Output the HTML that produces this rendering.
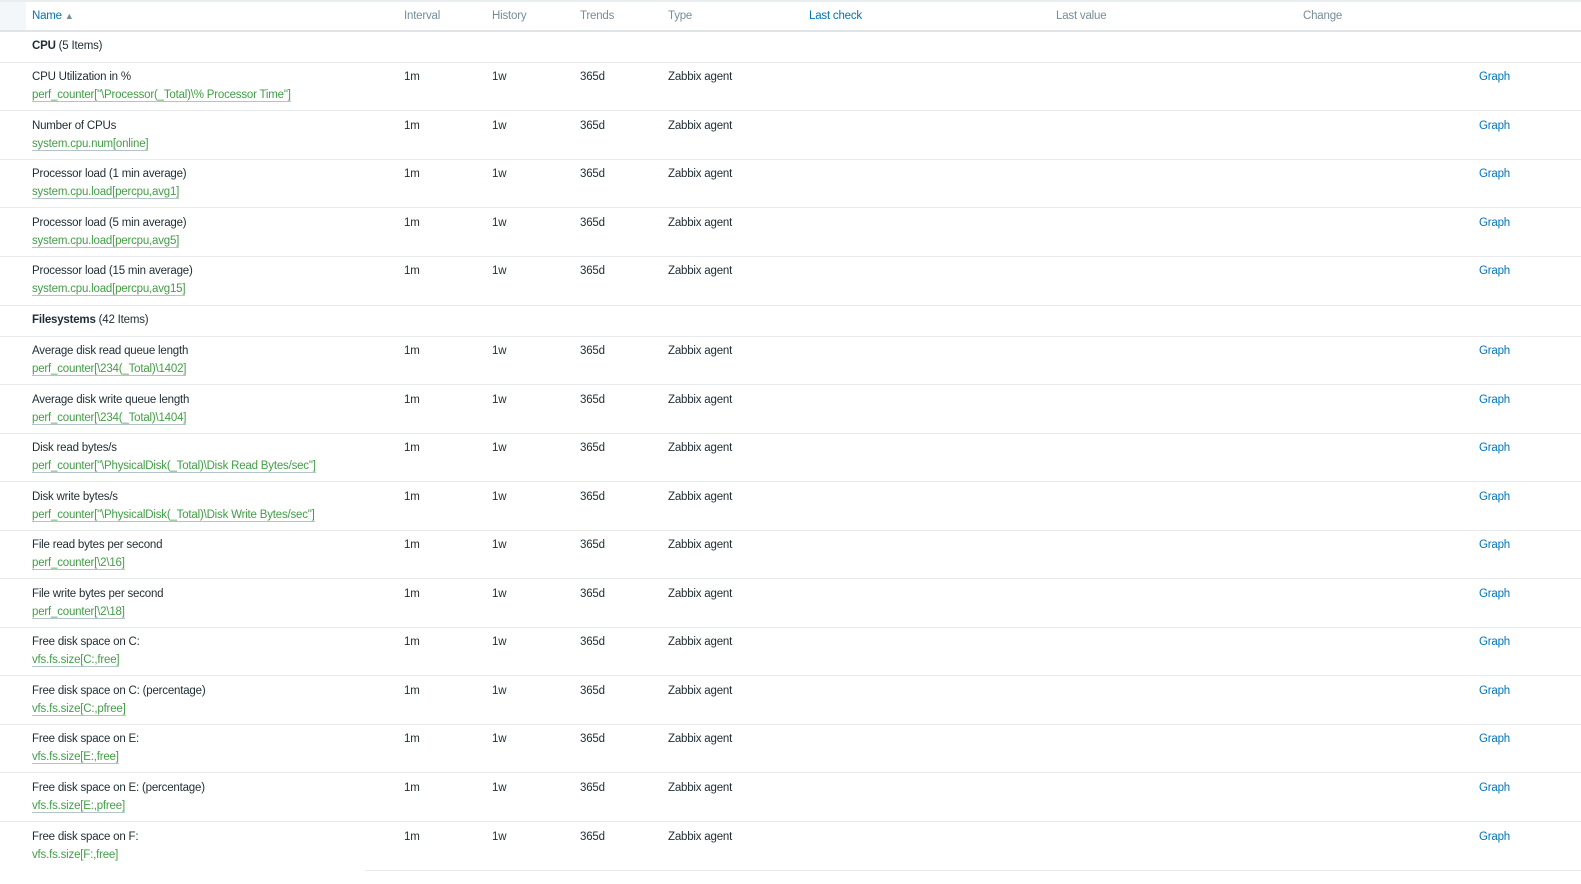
<!DOCTYPE html>
<html><head><meta charset="utf-8"><style>
html,body{margin:0;padding:0;background:#fff;width:1581px;height:884px;overflow:hidden;font-family:"Liberation Sans",sans-serif;font-size:11.5px;color:#1f2c33;letter-spacing:-0.2px}
.a{position:absolute;white-space:nowrap;line-height:14px}
.line{position:absolute;left:0;width:1581px;height:1px;background:#e8ebed}
.h{color:#768d99}
.b{color:#0275b8}
.k{color:#429e47;border-bottom:1px solid #b5c2c9;line-height:13px}
.g{color:#0275b8}
</style></head><body>
<div class="line" style="top:0;height:2px;background:#ebeef0"></div>
<div style="position:absolute;left:0;top:2px;width:26px;height:28px;background:#f4f7fa"></div>
<div class="line" style="top:30px;height:2px;background:#dfe4e7"></div>
<div class="a b" style="left:32px;top:9px">Name <span style="font-size:9px;color:#768d99">▲</span></div>
<div class="a h" style="left:404px;top:9px">Interval</div>
<div class="a h" style="left:492px;top:9px">History</div>
<div class="a h" style="left:580px;top:9px">Trends</div>
<div class="a h" style="left:668px;top:9px">Type</div>
<div class="a b" style="left:809px;top:9px">Last check</div>
<div class="a h" style="left:1056px;top:9px">Last value</div>
<div class="a h" style="left:1303px;top:9px">Change</div>
<div id="rows"></div>
<div class="a" style="left:32px;top:39px"><b>CPU</b> (5 Items)</div>
<div class="line" style="top:62px"></div>
<div class="a" style="left:32px;top:313px"><b>Filesystems</b> (42 Items)</div>
<div class="line" style="top:305px"></div>
<div class="line" style="top:336px"></div>
<div class="line" style="top:870px;left:365px;width:1216px"></div>

<div style="position:absolute;left:0;top:62px;width:1581px">
<div class="a" style="left:32px;top:8px">CPU Utilization in %</div><div class="a" style="left:32px;top:26px"><span class="k">perf_counter["\Processor(_Total)\% Processor Time"]</span></div>
<div class="a" style="left:404px;top:8px">1m</div><div class="a" style="left:492px;top:8px">1w</div><div class="a" style="left:580px;top:8px">365d</div><div class="a" style="left:668px;top:8px">Zabbix agent</div><div class="a g" style="left:1479px;top:8px">Graph</div>
<div class="line" style="top:48px"></div></div>

<div style="position:absolute;left:0;top:110.5px;width:1581px">
<div class="a" style="left:32px;top:8px">Number of CPUs</div><div class="a" style="left:32px;top:26px"><span class="k">system.cpu.num[online]</span></div>
<div class="a" style="left:404px;top:8px">1m</div><div class="a" style="left:492px;top:8px">1w</div><div class="a" style="left:580px;top:8px">365d</div><div class="a" style="left:668px;top:8px">Zabbix agent</div><div class="a g" style="left:1479px;top:8px">Graph</div>
<div class="line" style="top:48px"></div></div>

<div style="position:absolute;left:0;top:159px;width:1581px">
<div class="a" style="left:32px;top:8px">Processor load (1 min average)</div><div class="a" style="left:32px;top:26px"><span class="k">system.cpu.load[percpu,avg1]</span></div>
<div class="a" style="left:404px;top:8px">1m</div><div class="a" style="left:492px;top:8px">1w</div><div class="a" style="left:580px;top:8px">365d</div><div class="a" style="left:668px;top:8px">Zabbix agent</div><div class="a g" style="left:1479px;top:8px">Graph</div>
<div class="line" style="top:48px"></div></div>

<div style="position:absolute;left:0;top:207.5px;width:1581px">
<div class="a" style="left:32px;top:8px">Processor load (5 min average)</div><div class="a" style="left:32px;top:26px"><span class="k">system.cpu.load[percpu,avg5]</span></div>
<div class="a" style="left:404px;top:8px">1m</div><div class="a" style="left:492px;top:8px">1w</div><div class="a" style="left:580px;top:8px">365d</div><div class="a" style="left:668px;top:8px">Zabbix agent</div><div class="a g" style="left:1479px;top:8px">Graph</div>
<div class="line" style="top:48px"></div></div>

<div style="position:absolute;left:0;top:256px;width:1581px">
<div class="a" style="left:32px;top:8px">Processor load (15 min average)</div><div class="a" style="left:32px;top:26px"><span class="k">system.cpu.load[percpu,avg15]</span></div>
<div class="a" style="left:404px;top:8px">1m</div><div class="a" style="left:492px;top:8px">1w</div><div class="a" style="left:580px;top:8px">365d</div><div class="a" style="left:668px;top:8px">Zabbix agent</div><div class="a g" style="left:1479px;top:8px">Graph</div>
</div>

<div style="position:absolute;left:0;top:336px;width:1581px">
<div class="a" style="left:32px;top:8px">Average disk read queue length</div><div class="a" style="left:32px;top:26px"><span class="k">perf_counter[\234(_Total)\1402]</span></div>
<div class="a" style="left:404px;top:8px">1m</div><div class="a" style="left:492px;top:8px">1w</div><div class="a" style="left:580px;top:8px">365d</div><div class="a" style="left:668px;top:8px">Zabbix agent</div><div class="a g" style="left:1479px;top:8px">Graph</div>
<div class="line" style="top:48px"></div></div>

<div style="position:absolute;left:0;top:384.5px;width:1581px">
<div class="a" style="left:32px;top:8px">Average disk write queue length</div><div class="a" style="left:32px;top:26px"><span class="k">perf_counter[\234(_Total)\1404]</span></div>
<div class="a" style="left:404px;top:8px">1m</div><div class="a" style="left:492px;top:8px">1w</div><div class="a" style="left:580px;top:8px">365d</div><div class="a" style="left:668px;top:8px">Zabbix agent</div><div class="a g" style="left:1479px;top:8px">Graph</div>
<div class="line" style="top:48px"></div></div>

<div style="position:absolute;left:0;top:433px;width:1581px">
<div class="a" style="left:32px;top:8px">Disk read bytes/s</div><div class="a" style="left:32px;top:26px"><span class="k">perf_counter["\PhysicalDisk(_Total)\Disk Read Bytes/sec"]</span></div>
<div class="a" style="left:404px;top:8px">1m</div><div class="a" style="left:492px;top:8px">1w</div><div class="a" style="left:580px;top:8px">365d</div><div class="a" style="left:668px;top:8px">Zabbix agent</div><div class="a g" style="left:1479px;top:8px">Graph</div>
<div class="line" style="top:48px"></div></div>

<div style="position:absolute;left:0;top:481.5px;width:1581px">
<div class="a" style="left:32px;top:8px">Disk write bytes/s</div><div class="a" style="left:32px;top:26px"><span class="k">perf_counter["\PhysicalDisk(_Total)\Disk Write Bytes/sec"]</span></div>
<div class="a" style="left:404px;top:8px">1m</div><div class="a" style="left:492px;top:8px">1w</div><div class="a" style="left:580px;top:8px">365d</div><div class="a" style="left:668px;top:8px">Zabbix agent</div><div class="a g" style="left:1479px;top:8px">Graph</div>
<div class="line" style="top:48px"></div></div>

<div style="position:absolute;left:0;top:530px;width:1581px">
<div class="a" style="left:32px;top:8px">File read bytes per second</div><div class="a" style="left:32px;top:26px"><span class="k">perf_counter[\2\16]</span></div>
<div class="a" style="left:404px;top:8px">1m</div><div class="a" style="left:492px;top:8px">1w</div><div class="a" style="left:580px;top:8px">365d</div><div class="a" style="left:668px;top:8px">Zabbix agent</div><div class="a g" style="left:1479px;top:8px">Graph</div>
<div class="line" style="top:48px"></div></div>

<div style="position:absolute;left:0;top:578.5px;width:1581px">
<div class="a" style="left:32px;top:8px">File write bytes per second</div><div class="a" style="left:32px;top:26px"><span class="k">perf_counter[\2\18]</span></div>
<div class="a" style="left:404px;top:8px">1m</div><div class="a" style="left:492px;top:8px">1w</div><div class="a" style="left:580px;top:8px">365d</div><div class="a" style="left:668px;top:8px">Zabbix agent</div><div class="a g" style="left:1479px;top:8px">Graph</div>
<div class="line" style="top:48px"></div></div>

<div style="position:absolute;left:0;top:627px;width:1581px">
<div class="a" style="left:32px;top:8px">Free disk space on C:</div><div class="a" style="left:32px;top:26px"><span class="k">vfs.fs.size[C:,free]</span></div>
<div class="a" style="left:404px;top:8px">1m</div><div class="a" style="left:492px;top:8px">1w</div><div class="a" style="left:580px;top:8px">365d</div><div class="a" style="left:668px;top:8px">Zabbix agent</div><div class="a g" style="left:1479px;top:8px">Graph</div>
<div class="line" style="top:48px"></div></div>

<div style="position:absolute;left:0;top:675.5px;width:1581px">
<div class="a" style="left:32px;top:8px">Free disk space on C: (percentage)</div><div class="a" style="left:32px;top:26px"><span class="k">vfs.fs.size[C:,pfree]</span></div>
<div class="a" style="left:404px;top:8px">1m</div><div class="a" style="left:492px;top:8px">1w</div><div class="a" style="left:580px;top:8px">365d</div><div class="a" style="left:668px;top:8px">Zabbix agent</div><div class="a g" style="left:1479px;top:8px">Graph</div>
<div class="line" style="top:48px"></div></div>

<div style="position:absolute;left:0;top:724px;width:1581px">
<div class="a" style="left:32px;top:8px">Free disk space on E:</div><div class="a" style="left:32px;top:26px"><span class="k">vfs.fs.size[E:,free]</span></div>
<div class="a" style="left:404px;top:8px">1m</div><div class="a" style="left:492px;top:8px">1w</div><div class="a" style="left:580px;top:8px">365d</div><div class="a" style="left:668px;top:8px">Zabbix agent</div><div class="a g" style="left:1479px;top:8px">Graph</div>
<div class="line" style="top:48px"></div></div>

<div style="position:absolute;left:0;top:772.5px;width:1581px">
<div class="a" style="left:32px;top:8px">Free disk space on E: (percentage)</div><div class="a" style="left:32px;top:26px"><span class="k">vfs.fs.size[E:,pfree]</span></div>
<div class="a" style="left:404px;top:8px">1m</div><div class="a" style="left:492px;top:8px">1w</div><div class="a" style="left:580px;top:8px">365d</div><div class="a" style="left:668px;top:8px">Zabbix agent</div><div class="a g" style="left:1479px;top:8px">Graph</div>
<div class="line" style="top:48.5px"></div></div>

<div style="position:absolute;left:0;top:821.5px;width:1581px">
<div class="a" style="left:32px;top:8px">Free disk space on F:</div><div class="a" style="left:32px;top:26px"><span class="k" style="border:0">vfs.fs.size[F:,free]</span></div>
<div class="a" style="left:404px;top:8px">1m</div><div class="a" style="left:492px;top:8px">1w</div><div class="a" style="left:580px;top:8px">365d</div><div class="a" style="left:668px;top:8px">Zabbix agent</div><div class="a g" style="left:1479px;top:8px">Graph</div>
</div>
</body></html>
